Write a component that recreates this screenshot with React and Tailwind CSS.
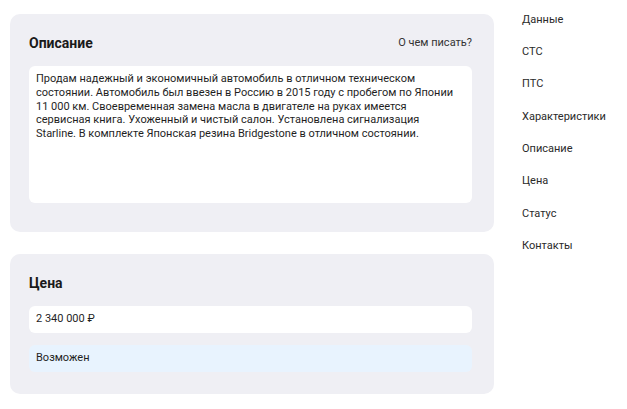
import React from "react";

const navItems = [
  "Данные",
  "СТС",
  "ПТС",
  "Характеристики",
  "Описание",
  "Цена",
  "Статус",
  "Контакты",
];

// lines as they wrap in the textarea
const descriptionLines = [
  "Продам надежный и экономичный автомобиль в отличном техническом",
  "состоянии. Автомобиль был ввезен в Россию в 2015 году с пробегом по Японии",
  "11 000 км. Своевременная замена масла в двигателе на руках имеется",
  "сервисная книга. Ухоженный и чистый салон. Установлена сигнализация",
  "Starline. В комплекте Японская резина Bridgestone в отличном состоянии.",
];

function App() {
  return (
    <div className="flex w-[627px] h-[409px] bg-white font-['Roboto',sans-serif] text-[#222]">
      {/* Left column with cards */}
      <div className="flex flex-col w-[484px] ml-[10px] mt-[14px] gap-[22px]">
        {/* Описание */}
        <div className="bg-[#efeff4] rounded-[10px] pt-[19px] pb-[29px] pl-[19px] pr-[22px]">
          <div className="flex items-center justify-between h-[20px]">
            <h2 className="text-[14px] font-bold text-[#1a1a1a]">Описание</h2>
            <span className="text-[11px] text-[#333]">О чем писать?</span>
          </div>
          <div className="mt-[13px] h-[137px] bg-white rounded-[6px] pl-[7px] pr-[7px] pt-[6px] text-[11px] leading-[13.75px] text-[#1f1f1f]">
            {descriptionLines.map((line, i) => (
              <div key={i} className="whitespace-nowrap">
                {line}
              </div>
            ))}
          </div>
        </div>

        {/* Цена */}
        <div className="bg-[#efeff4] rounded-[10px] pt-[19px] pb-[22px] pl-[19px] pr-[22px]">
          <div className="flex items-center h-[20px]">
            <h2 className="text-[14px] font-bold text-[#1a1a1a]">Цена</h2>
          </div>
          <div className="mt-[13px] h-[27px] bg-white rounded-[6px] px-[7px] flex items-center text-[11px] text-[#1f1f1f]">
            2 340 000 ₽
          </div>
          <div className="mt-[12px] h-[27px] bg-[#e8f3fe] rounded-[6px] px-[7px] flex items-center text-[11px] text-[#1f1f1f]">
            Возможен
          </div>
        </div>
      </div>

      {/* Right navigation */}
      <nav className="flex flex-col ml-[28px] mt-[4px]">
        {navItems.map((item) => (
          <a
            key={item}
            href="#"
            className="h-[32.3px] flex items-center text-[11px] text-[#2a2a2a]"
          >
            {item}
          </a>
        ))}
      </nav>
    </div>
  );
}

export default App;
